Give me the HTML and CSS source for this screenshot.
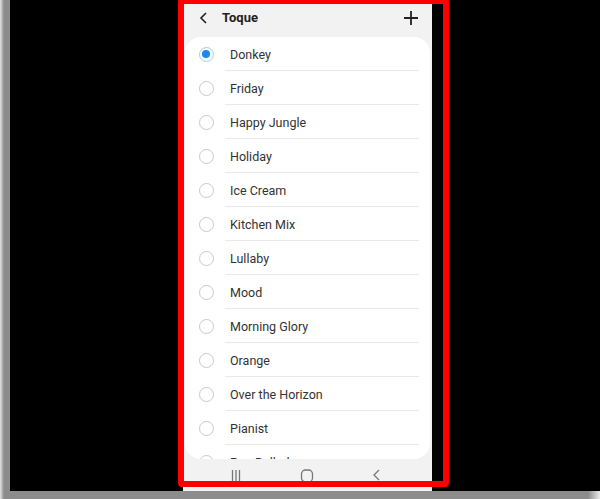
FILE: index.html
```html
<!DOCTYPE html>
<html lang="en">
<head>
  <meta charset="UTF-8">
  <meta name="viewport" content="width=device-width, initial-scale=1.0">
  <title>Toque</title>
  <link rel="stylesheet" href="styles.css">
</head>
<body>
  <div class="frame">
    <div class="phone">
      <div class="header">
        <svg class="back" width="10" height="12" viewBox="0 0 10 12"><path d="M7 1 L2 6 L7 11" fill="none" stroke="#222" stroke-width="1.6"/></svg>
        <p class="title">Toque</p>
        <svg class="add" width="14" height="14" viewBox="0 0 14 14"><path d="M7 0 V14 M0 7 H14" fill="none" stroke="#222" stroke-width="1.8"/></svg>
      </div>
      <div class="card">
        <div class="row"><span class="radio checked"></span><p class="label">Donkey</p></div>
        <div class="row"><span class="radio"></span><p class="label">Friday</p></div>
        <div class="row"><span class="radio"></span><p class="label">Happy Jungle</p></div>
        <div class="row"><span class="radio"></span><p class="label">Holiday</p></div>
        <div class="row"><span class="radio"></span><p class="label">Ice Cream</p></div>
        <div class="row"><span class="radio"></span><p class="label">Kitchen Mix</p></div>
        <div class="row"><span class="radio"></span><p class="label">Lullaby</p></div>
        <div class="row"><span class="radio"></span><p class="label">Mood</p></div>
        <div class="row"><span class="radio"></span><p class="label">Morning Glory</p></div>
        <div class="row"><span class="radio"></span><p class="label">Orange</p></div>
        <div class="row"><span class="radio"></span><p class="label">Over the Horizon</p></div>
        <div class="row"><span class="radio"></span><p class="label">Pianist</p></div>
        <div class="row"><span class="radio"></span><p class="label">Pop Ballad</p></div>
      </div>
      <div class="navbar">
        <svg width="10" height="14" viewBox="0 0 10 14"><path d="M1.5 2 V14 M5 2 V14 M8.5 2 V14" fill="none" stroke="#777" stroke-width="1.3"/></svg>
        <svg width="14" height="14" viewBox="0 0 14 14"><rect x="1.5" y="2" width="11" height="12" rx="4" fill="none" stroke="#777" stroke-width="1.3"/></svg>
        <svg width="10" height="14" viewBox="0 0 10 14"><path d="M7 2 L2 7 L7 12" fill="none" stroke="#777" stroke-width="1.3"/></svg>
      </div>
    </div>
    <div class="highlight"></div>
  </div>
</body>
</html>
```

FILE: styles.css
```css
* {
  padding: 0;
  margin: 0;
  box-sizing: border-box;
}
body {
  width: 600px;
  height: 499px;
  overflow: hidden;
  background: linear-gradient(to right, #e6e6e6 0, #8c8c8c 4px, #8c8c8c 588px, #ececec 600px);
  font-family: Roboto, "Noto Sans", sans-serif;
}
.frame {
  position: relative;
  width: 590px;
  height: 491px;
  margin-left: 10px;
  padding-left: 173px;
  background: #000;
}
.phone {
  width: 249px;
  height: 491px;
  background: #f2f2f2;
  display: flex;
  flex-direction: column;
}
.phone .header {
  height: 37px;
  display: flex;
  align-items: center;
  padding: 0 14px 2px 16px;
}
.phone .header .back {
  display: block;
}
.phone .header .title {
  flex: 1;
  margin-left: 13px;
  font-size: 13px;
  font-weight: 700;
  color: #222;
}
.phone .header .add {
  display: block;
}
.phone .card {
  height: 422px;
  margin: 0 2px;
  background: #fff;
  border-radius: 16px;
  overflow: hidden;
}
.phone .card .row {
  height: 34px;
  display: flex;
  align-items: center;
  padding-left: 14px;
}
.phone .card .radio {
  width: 15px;
  height: 15px;
  border-radius: 50%;
  border: 1.3px solid #c9c9c9;
  flex-shrink: 0;
  position: relative;
}
.phone .card .radio.checked {
  border-color: #9fcdf5;
}
.phone .card .radio.checked::after {
  content: '';
  position: absolute;
  left: 2.2px;
  top: 2.2px;
  width: 8px;
  height: 8px;
  border-radius: 50%;
  background: #1a88f0;
}
.phone .card .label {
  flex: 1;
  height: 34px;
  padding-top: 2px;
  line-height: 31px;
  margin: 0 11px 0 11px;
  padding-left: 5px;
  border-bottom: 1px solid #e9e9e9;
  font-size: 12.5px;
  color: #333;
}
.phone .navbar {
  height: 32px;
  display: flex;
  justify-content: space-between;
  align-items: flex-start;
  padding: 9px 50px 0 48px;
}
.highlight {
  position: absolute;
  left: 168px;
  top: -2px;
  width: 271px;
  height: 489px;
  border: 6.5px solid #fe0000;
  border-radius: 4px;
}
```
